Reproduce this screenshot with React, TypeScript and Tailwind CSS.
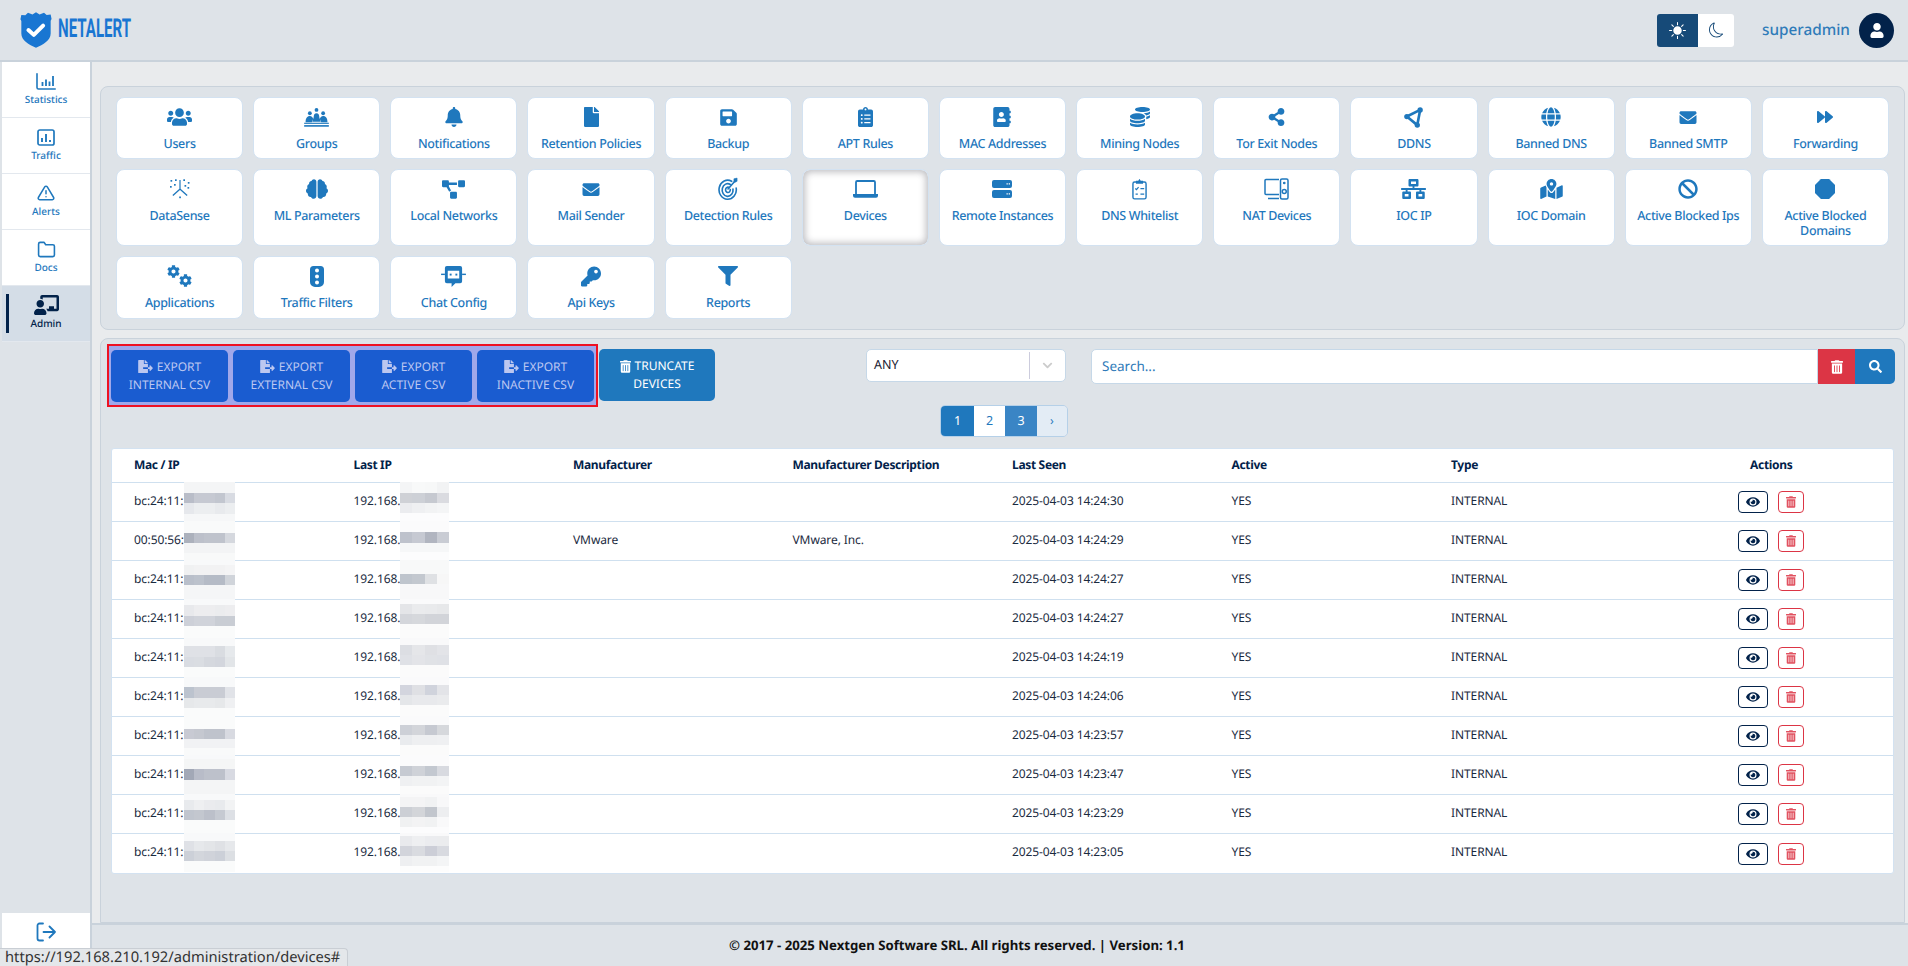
import React from "react";
import {
  FaUsers, FaBell, FaFile, FaSave, FaAddressBook, FaCoins, FaShareAlt, FaGlobe, FaEnvelope, FaForward,
  FaBrain, FaProjectDiagram, FaNetworkWired, FaMapMarkedAlt, FaBan, FaCog, FaKey, FaFilter,
  FaChalkboardTeacher, FaUser, FaFileExport, FaTrashAlt, FaSearch, FaEye, FaChevronDown, FaClipboardList,
} from "react-icons/fa";
import { BsFillOctagonFill, BsMoon, BsSunFill } from "react-icons/bs";
import { FiAlertTriangle, FiFolder } from "react-icons/fi";

const FONT = "font-['Noto_Sans','Liberation_Sans',sans-serif] [text-rendering:geometricPrecision]";

function StatsIcon() {
  return (
    <svg viewBox="0 0 20 17" className="w-[20px] h-[17px]" fill="none" stroke="currentColor" strokeWidth="1.600" strokeLinecap="round">
      <path d="M1 0.800V14.500a1.500 1.500 0 0 0 1.500 1.500H19.200" />
      <path d="M6.500 9v4M10 6.500v6.500M13.500 8.500v4.500M17 3v10" strokeWidth="1.800" strokeLinecap="butt" />
    </svg>
  );
}

function TrafficIcon() {
  return (
    <svg viewBox="0 0 18 17" className="w-[18px] h-[17px]" fill="none" stroke="currentColor">
      <rect x="1" y="1" width="16" height="15" rx="1.800" strokeWidth="1.700" />
      <path d="M5 9v4M9 5v8M13 11v2" strokeWidth="1.900" />
    </svg>
  );
}

function LogoutIcon() {
  return (
    <svg viewBox="0 0 20 20" className="w-[20px] h-[20px]" fill="none" stroke="currentColor" strokeWidth="1.800" strokeLinecap="round" strokeLinejoin="round">
      <path d="M7 1.500H3.500a2 2 0 0 0-2 2v13a2 2 0 0 0 2 2H7" />
      <path d="M7.500 10H19M13.500 4.500L19 10l-5.500 5.500" />
    </svg>
  );
}

function GroupsIcon() {
  return (
    <svg viewBox="0 0 26 20" className="w-[25px] h-[19px] fill-current">
      <circle cx="13" cy="2" r="2" />
      <path d="M10 10c0-3 1-4.500 3-4.500S16 7 16 10l1.500 4.500h-9z" />
      <circle cx="6" cy="5.500" r="2" />
      <path d="M1.500 15c0-4 1.500-6.500 4.500-6.500 2 0 3 1.500 3.500 3L8 15z" />
      <circle cx="20" cy="5.500" r="2" />
      <path d="M24.500 15c0-4-1.500-6.500-4.500-6.500-2 0-3 1.500-3.500 3L18 15z" />
      <rect x="0" y="15.500" width="26" height="1.200" />
      <rect x="0" y="18" width="26" height="1.700" />
    </svg>
  );
}

function DataSenseIcon() {
  return (
    <svg viewBox="0 0 20 20" className="w-[20px] h-[20px] fill-current">
      <path d="M9.400 1h1.200v8.800l7 6.200-.9.900L10 11l-6.700 5.900-.9-.9 7-6.200z" />
      <rect x="0.500" y="1" width="1.700" height="1.700" />
      <rect x="5" y="0.300" width="1.700" height="1.700" />
      <rect x="13.300" y="0.300" width="1.700" height="1.700" />
      <rect x="17.800" y="3" width="1.700" height="1.700" />
      <rect x="0" y="7" width="1.700" height="1.700" />
      <rect x="4" y="5" width="1.700" height="1.700" />
      <rect x="14.500" y="6" width="1.700" height="1.700" />
      <rect x="17.500" y="8" width="1.700" height="1.700" />
      <rect x="9.200" y="17.500" width="1.700" height="1.700" />
    </svg>
  );
}

function DdnsIcon() {
  return (
    <svg viewBox="0 0 20 22" className="w-[19px] h-[21px]">
      <path d="M17 3L3 10l11 9z" fill="none" stroke="currentColor" strokeWidth="2.800" strokeLinejoin="round" />
      <circle cx="17" cy="3" r="2.800" fill="currentColor" />
      <circle cx="3" cy="10" r="2.800" fill="currentColor" />
      <circle cx="14" cy="19" r="2.800" fill="currentColor" />
    </svg>
  );
}

function TargetIcon() {
  return (
    <svg viewBox="0 0 22 26" className="w-[20px] h-[24px]" fill="none" stroke="currentColor" strokeLinecap="round">
      <path d="M15 4.500A9.500 10.500 0 1 0 20 12" strokeWidth="1.800" />
      <path d="M13.500 8A6 7 0 1 0 16.500 13" strokeWidth="1.800" />
      <path d="M12.500 11.500A2.600 3 0 1 0 13.500 13.500" strokeWidth="1.800" />
      <path d="M11 13L19 4" strokeWidth="1.800" />
      <path d="M17.500 5V1.800L21 1v3.500L19 5.500z" fill="currentColor" strokeWidth="0.600" />
    </svg>
  );
}

function LaptopIcon() {
  return (
    <svg viewBox="0 0 25 18" className="w-[25px] h-[18px]">
      <rect x="3" y="1" width="19" height="14" rx="1.200" fill="none" stroke="currentColor" strokeWidth="1.800" />
      <path d="M0 14h25v1.800a2 2 0 0 1-2 2H2a2 2 0 0 1-2-2z" fill="currentColor" />
    </svg>
  );
}

function ServersIcon() {
  return (
    <svg viewBox="0 0 20 18" className="w-[20px] h-[18px]">
      <path fill="currentColor" fillRule="evenodd" d="M2 0h16a2 2 0 0 1 2 2v4a2 2 0 0 1-2 2H2a2 2 0 0 1-2-2V2a2 2 0 0 1 2-2zm12.500 3.300v1.300h1.300V3.300zm2.200 0v1.300H18V3.300z" />
      <path fill="currentColor" fillRule="evenodd" d="M2 10h16a2 2 0 0 1 2 2v4a2 2 0 0 1-2 2H2a2 2 0 0 1-2-2v-4a2 2 0 0 1 2-2zm12.500 3.300v1.300h1.300v-1.300zm2.200 0v1.300H18v-1.300z" />
    </svg>
  );
}

function ClipCheckIcon() {
  return (
    <svg viewBox="0 0 16 22" className="w-[15px] h-[21px]" fill="none" stroke="currentColor" strokeWidth="1.500">
      <rect x="1" y="3" width="14" height="18" rx="1.800" />
      <path d="M5 4V2.500h2L8 1l1 1.500h2V4z" fill="currentColor" />
      <path d="M3.500 10l1.300 1.200L7 8.500M9 10h4M3.800 16h2.400M9 16h4" strokeWidth="1.300" />
    </svg>
  );
}

function NatIcon() {
  return (
    <svg viewBox="0 0 25 22" className="w-[25px] h-[22px]" fill="none" stroke="currentColor" strokeWidth="1.500">
      <path d="M15 1.500H2a1 1 0 0 0-1 1v13a1 1 0 0 0 1 1h13M4 20.500h11" />
      <rect x="16.500" y="1" width="7.500" height="20" rx="1.500" />
      <circle cx="20.250" cy="13.500" r="2" />
      <circle cx="20.250" cy="5" r="0.600" />
    </svg>
  );
}

function TrafficLightIcon() {
  return (
    <svg viewBox="0 0 14 21" className="w-[14px] h-[21px]">
      <path fill="currentColor" fillRule="evenodd" d="M3.500 0h7A3.500 3.500 0 0 1 14 3.500V16a5 5 0 0 1-5 5H5a5 5 0 0 1-5-5V3.500A3.500 3.500 0 0 1 3.500 0zM7 2.500a2 2 0 1 0 0 4 2 2 0 0 0 0-4zm0 6a2 2 0 1 0 0 4 2 2 0 0 0 0-4zm0 6a2 2 0 1 0 0 4 2 2 0 0 0 0-4z" />
    </svg>
  );
}

function ChatIcon() {
  return (
    <svg viewBox="0 0 26 22" className="w-[25px] h-[21px] fill-current">
      <path fillRule="evenodd" d="M6 0h14a2 2 0 0 1 2 2v14a2 2 0 0 1-2 2h-5l-4 4v-4H6a2 2 0 0 1-2-2V2a2 2 0 0 1 2-2zM7 5v8h12V5z" />
      <rect x="0" y="8" width="4" height="1.500" />
      <rect x="22" y="8" width="4" height="1.500" />
      <rect x="9" y="8" width="2" height="2" />
      <rect x="15" y="8" width="2" height="2" />
    </svg>
  );
}

function CogsIcon() {
  return (
    <span className="flex w-[25px] h-[22px]">
      <FaCog className="w-[13px] h-[13px] self-start" />
      <FaCog className="w-[13px] h-[13px] self-end -ml-[1px]" />
    </span>
  );
}

function Shield() {
  return (
    <svg viewBox="0 0 36 40" className="w-[32px] h-[38px]">
      <path fill="#1976d2" d="M18 0l4 2.500L27 .5l3 2.500 4.500-.5 1 5-1 2V24c0 8-8.500 12.500-16.500 16C10 36.500 1.500 32 1.500 24V10l-1-2 1-5L6 3.500 9 .5l5 2z" />
      <path fill="none" stroke="#fff" strokeWidth="4.500" strokeLinecap="round" strokeLinejoin="round" d="M9.500 20l6 5.500L26 15" />
    </svg>
  );
}

const row1 = [
  ["Users", <FaUsers className="w-[25px] h-[20px]" />],
  ["Groups", <GroupsIcon />],
  ["Notifications", <FaBell className="w-[18px] h-[20px]" />],
  ["Retention Policies", <FaFile className="w-[15px] h-[20px]" />],
  ["Backup", <FaSave className="w-[17px] h-[19px]" />],
  ["APT Rules", <FaClipboardList className="w-[15px] h-[20px]" />],
  ["MAC Addresses", <FaAddressBook className="w-[18px] h-[20px]" />],
  ["Mining Nodes", <FaCoins className="w-[20px] h-[20px]" />],
  ["Tor Exit Nodes", <FaShareAlt className="w-[17px] h-[18px]" />],
  ["DDNS", <DdnsIcon />],
  ["Banned DNS", <FaGlobe className="w-[20px] h-[20px]" />],
  ["Banned SMTP", <FaEnvelope className="w-[20px] h-[17px]" />],
  ["Forwarding", <FaForward className="w-[20px] h-[16px]" />],
] as const;
const row2 = [
  ["DataSense", <DataSenseIcon />],
  ["ML Parameters", <FaBrain className="w-[22px] h-[20px]" />],
  ["Local Networks", <FaProjectDiagram className="w-[23px] h-[19px]" />],
  ["Mail Sender", <FaEnvelope className="w-[20px] h-[17px]" />],
  ["Detection Rules", <TargetIcon />],
  ["Devices", <LaptopIcon />],
  ["Remote Instances", <ServersIcon />],
  ["DNS Whitelist", <ClipCheckIcon />],
  ["NAT Devices", <NatIcon />],
  ["IOC IP", <FaNetworkWired className="w-[25px] h-[20px]" />],
  ["IOC Domain", <FaMapMarkedAlt className="w-[23px] h-[20px]" />],
  ["Active Blocked Ips", <FaBan className="w-[20px] h-[20px]" />],
  ["Active Blocked Domains", <BsFillOctagonFill className="w-[20px] h-[20px]" />],
] as const;
const row3 = [
  ["Applications", <CogsIcon />],
  ["Traffic Filters", <TrafficLightIcon />],
  ["Chat Config", <ChatIcon />],
  ["Api Keys", <FaKey className="w-[20px] h-[21px]" />],
  ["Reports", <FaFilter className="w-[20px] h-[20px]" />],
] as const;

function Tile({ label, icon, rowH, active }: { label: string; icon: React.ReactNode; rowH: string; active?: boolean }) {
  return (
    <div
      className={`${rowH} bg-white rounded-[8px] border border-[#d3e2f1] flex flex-col items-center text-[#1f78bd] text-[12.500px] tracking-[-0.35px] leading-[15px] font-medium text-center px-1 pt-[8px] ${active ? "shadow-[inset_0_0_7px_2px_rgba(90,90,100,0.4)]" : ""}`}
    >
      <div className="h-[22px] flex items-center justify-center">{icon}</div>
      <div className="mt-[8px]">{label}</div>
    </div>
  );
}

function SideItem({ icon, label, active }: { icon: React.ReactNode; label: string; active?: boolean }) {
  return (
    <div
      className={`relative h-[56px] flex flex-col items-center pt-[10px] text-[10px] leading-[12px] font-medium border-b border-[#e3e8ee] ${active ? "bg-[#d4dde7] text-[#02224a]" : "bg-white text-[#1f78bd]"}`}
    >
      {active && <div className="absolute left-[4px] top-[8px] w-[3px] h-[39px] bg-[#02224a]" />}
      <div className="h-[18px] flex items-center justify-center">{icon}</div>
      <div className="mt-[3px]">{label}</div>
    </div>
  );
}

type Band = [number, string[]];

const macBands: Band[][] = [
  [[0, ["#f4f5f6"]], [11, ["#b9bdc8", "#c6c9d2", "#c6c9d2", "#c2c6cf", "#d8dbe2"]], [21, ["#e6e8ec", "#eceef0", "#eceef0", "#e8eaed", "#eceef0"]], [32, ["#f6f7f8"]]],
  [[0, ["#f9fafa"]], [12, ["#acb1bc", "#bcc0ca", "#bfc3cc", "#bfc3cc", "#d5d8de"]], [22, ["#f3f4f5"]], [32, ["#f8f9f9"]]],
  [[0, ["#f8f9fa"]], [5, ["#f0f1f2", "#f2f2f3", "#f2f2f3", "#f2f2f3", "#f4f4f5"]], [15, ["#b9bfca", "#bcc2cc", "#b5bbc6", "#b5bbc6", "#d0d4da"]], [25, ["#f5f6f7"]]],
  [[0, ["#f8f9fa"]], [6, ["#e8e9ec", "#ededef", "#ededef", "#ebecee", "#ededef"]], [17, ["#cdd0d8", "#d0d3da", "#d0d3da", "#c9cdd4", "#c9cdd4"]], [27, ["#fafbfb"]]],
  [[0, ["#f8f9fa"]], [8, ["#dfe1e6", "#dfe1e6", "#dfe1e6", "#d9dce1", "#e6e9ec"]], [19, ["#d9dce2", "#dadde2", "#d5d8de", "#d3d6dd", "#e2e5e8"]], [29, ["#fafbfb"]]],
  [[0, ["#f8f9fa"]], [10, ["#bcc3ce", "#c9ccd4", "#c9ccd4", "#c9ccd4", "#e1e3e8"]], [21, ["#e6e8ea", "#e8eaec", "#e8eaec", "#e6e8ea", "#eff0f2"]], [31, ["#fafbfb"]]],
  [[0, ["#fafbfb"]], [13, ["#c8cad3", "#c5c8d0", "#bfc3cc", "#bfc3cc", "#d8dae1"]], [23, ["#f1f2f4"]], [32, ["#f9fafa"]]],
  [[0, ["#f8f9fa"]], [4, ["#f5f6f6"]], [14, ["#a2a8b6", "#b8bcc8", "#bdc1cb", "#bdc1cb", "#d8dae2"]], [25, ["#f4f5f6"]]],
  [[0, ["#f8f9fa"]], [6, ["#e8eaed", "#eeeff1", "#eaebee", "#e8eaed", "#f2f3f4"]], [16, ["#c0c5ce", "#c3c7cf", "#bcc0ca", "#c6cad2", "#dde0e5"]], [26, ["#fafbfb"]]],
  [[0, ["#f8f9fa"]], [8, ["#dfe1e6", "#e6e8eb", "#e3e5e8", "#dfe1e5", "#e6e8eb"]], [18, ["#ccd0d8", "#d3d6dc", "#d0d3da", "#ccd0d8", "#dcdfe3"]], [28, ["#fafbfb"]]],
];

const ipBands: Band[][] = [
  [[0, ["#f4f5f6", "#f8f9f9", "#f7f8f8", "#f2f3f4"]], [11, ["#cfd1d6", "#cdd0d6", "#c6c9d0", "#dadbe0"]], [21, ["#ebecef", "#eff0f2", "#f2f3f4", "#f4f5f6"]], [31, ["#fcfcfd"]]],
  [[0, ["#fbfbfc"]], [11, ["#bec2cc", "#c6c9d2", "#b1b5c0", "#c9ccd4"]], [22, ["#f6f7f8"]], [31, ["#fcfcfd"]]],
  [[0, ["#f8f9f9"]], [14, ["#bfc5cd", "#c3c8cf", "#dfe1e4", "#f7f7f7"]], [24, ["#f8f8f9"]]],
  [[0, ["#fafafb"]], [5, ["#e4e5e8", "#eaebed", "#e9eaec", "#e7e8ea"]], [15, ["#d4d6db", "#d6d8dc", "#d2d4d9", "#d2d4d9"]], [25, ["#fbfbfb"]]],
  [[0, ["#f9f9fa"]], [7, ["#dcdee3", "#e5e6e9", "#dfe0e4", "#e3e4e8"]], [17, ["#dfe1e6", "#e3e4e8", "#e0e2e6", "#dfe1e6"]], [27, ["#fbfbfb"]]],
  [[0, ["#fafafb"]], [8, ["#d3d5de", "#dfe0e4", "#d0d3dc", "#e3e4e8"]], [18, ["#e4e6e9", "#e8e9ec", "#e8e9ec", "#eaebed"]], [28, ["#fbfbfb"]]],
  [[0, ["#fafafb"]], [9, ["#cdd0d7", "#d3d5da", "#c6c9d1", "#d6d8dc"]], [19, ["#e9ebee", "#eeeff1", "#eeeff1", "#eff0f2"]], [29, ["#fbfbfb"]]],
  [[0, ["#fbfbfc"]], [11, ["#c6cad2", "#cfd2d8", "#c3c8d0", "#d8dae0"]], [21, ["#eff0f2", "#f1f2f3", "#f1f2f3", "#f3f4f5"]], [31, ["#fbfbfb"]]],
  [[0, ["#f9f9fa"]], [3, ["#f4f4f5", "#f4f4f5", "#f1f2f3", "#f8f8f9"]], [13, ["#cccfd5", "#d3d5d9", "#c2c6cd", "#edeef0"]], [23, ["#f0f1f2", "#f3f3f4", "#f1f2f3", "#f9f9fa"]], [33, ["#fcfcfd"]]],
  [[0, ["#f9f9fa"]], [3, ["#e9eaed", "#eeeff1", "#ebecef", "#ebecee"]], [13, ["#d2d4db", "#d9dbe0", "#ccced7", "#d8dae0"]], [23, ["#eeeff1", "#f1f2f3", "#f1f2f3", "#f4f5f6"]], [33, ["#fdfdfd"]]],
];

function Redact({ bands, left, width }: { bands: Band[]; left: number; width: number }) {
  return (
    <div className="absolute top-[-1px] h-[39px] bg-[#fcfcfd]" style={{ left, width }}>
      {bands.map(([y, cells], i) => {
        const next = i + 1 < bands.length ? bands[i + 1][0] : 39;
        return (
          <div key={i} className="absolute left-0 right-0 flex" style={{ top: y, height: next - y }}>
            {cells.map((c, j) => (
              <div key={j} className="flex-1" style={{ background: c }} />
            ))}
          </div>
        );
      })}
    </div>
  );
}

const rows = [
  ["bc:24:11:", "14:24:30"],
  ["00:50:56:", "14:24:29", "VMware", "VMware, Inc."],
  ["bc:24:11:", "14:24:27"],
  ["bc:24:11:", "14:24:27"],
  ["bc:24:11:", "14:24:19"],
  ["bc:24:11:", "14:24:06"],
  ["bc:24:11:", "14:23:57"],
  ["bc:24:11:", "14:23:47"],
  ["bc:24:11:", "14:23:29"],
  ["bc:24:11:", "14:23:05"],
];

const exportsList = [
  ["EXPORT", "INTERNAL CSV"],
  ["EXPORT", "EXTERNAL CSV"],
  ["EXPORT", "ACTIVE CSV"],
  ["EXPORT", "INACTIVE CSV"],
];

const GRID = "grid grid-cols-[repeat(7,219.5px)_1fr]";

export default function App() {
  return (
    <div className={`${FONT} w-[1908px] h-[966px] overflow-hidden bg-[#dee3e8] flex flex-col relative`}>
      <header className="h-[62px] shrink-0 border-b-2 border-[#c9d2db] flex items-center justify-between pl-[20px] pr-[14px]">
        <div className="flex items-center gap-[6px] pb-[1px]">
          <Shield />
          <span className="font-['Roboto',sans-serif] font-bold text-[#1976d2] text-[26px] scale-x-[0.58] origin-left">NETALERT</span>
        </div>
        <div className="flex items-center">
          <div className="flex h-[33px] rounded-[3px] overflow-hidden">
            <div className="w-[41px] bg-[#164a78] text-white flex items-center justify-center"><BsSunFill className="w-[17px] h-[17px]" /></div>
            <div className="w-[36px] bg-white text-[#164a78] flex items-center justify-center"><BsMoon className="w-[15px] h-[16px]" /></div>
          </div>
          <span className="ml-[28px] w-[86px] text-[15.300px] font-medium text-[#2f7bb9]">superadmin</span>
          <div className="ml-[11px] w-[35px] h-[35px] rounded-full bg-[#02224a] flex items-center justify-center text-white"><FaUser className="w-[14px] h-[15px]" /></div>
        </div>
      </header>

      <div className="flex-1 flex min-h-0">
        <aside className="w-[92px] shrink-0 border-r-2 border-[#c9d2db] pl-[2px] flex flex-col">
          <SideItem label="Statistics" icon={<StatsIcon />} />
          <SideItem label="Traffic" icon={<TrafficIcon />} />
          <SideItem label="Alerts" icon={<FiAlertTriangle className="w-[20px] h-[18px]" />} />
          <SideItem label="Docs" icon={<FiFolder className="w-[21px] h-[19px]" />} />
          <SideItem active label="Admin" icon={<FaChalkboardTeacher className="w-[25px] h-[20px]" />} />
          <div className="flex-1" />
          <div className="h-[53px] bg-white text-[#1f78bd] flex justify-center pt-[9px]">
            <LogoutIcon />
          </div>
        </aside>

        <main className="flex-1 min-w-0 flex flex-col">
          <div className="h-[861px] bg-[#e9ebed] pl-[8px] pr-[3px] pt-[24px] flex flex-col gap-[8px]">
            <section className="h-[244px] bg-[#dee3e8] border border-[#c9d2db] rounded-[8px] px-[15px] pt-[10px] flex flex-col gap-[10px]">
              <div className="grid grid-cols-[repeat(13,minmax(0,1fr))] gap-x-[10px]">
                {row1.map(([l, i]) => <Tile key={l} label={l} icon={i} rowH="h-[62px]" />)}
              </div>
              <div className="grid grid-cols-[repeat(13,minmax(0,1fr))] gap-x-[10px]">
                {row2.map(([l, i]) => <Tile key={l} label={l} icon={i} rowH="h-[77px]" active={l === "Devices"} />)}
              </div>
              <div className="grid grid-cols-[repeat(13,minmax(0,1fr))] gap-x-[10px]">
                {row3.map(([l, i]) => <Tile key={l} label={l} icon={i} rowH="h-[63px]" />)}
              </div>
            </section>

            <section className="flex-1 bg-[#dee3e8] border border-[#c9d2db] rounded-t-[8px] pl-[6px] pr-[9px] pt-[5px] flex flex-col">
              <div className="flex items-start">
                <div className="w-[491px] h-[63px] border-2 border-[#ee1122] bg-[#a0a8ea] flex items-center gap-[5px] px-[2px]">
                  {exportsList.map(([a, b]) => (
                    <div key={b} className="h-[52px] flex-1 rounded-[5px] bg-[#1a5cd0] text-[#bcc7f0] text-[12px] leading-[18px] flex flex-col items-center justify-center">
                      <div className="flex items-center gap-[4px]"><FaFileExport className="w-[15px] h-[13px]" />{a}</div>
                      <div>{b}</div>
                    </div>
                  ))}
                </div>
                <div className="ml-[1px] mt-[5px] w-[116px] h-[52px] rounded-[5px] bg-[#1f78bd] text-white text-[12px] leading-[18px] flex flex-col items-center justify-center">
                  <div className="flex items-center gap-[4px]"><FaTrashAlt className="w-[11px] h-[13px]" />TRUNCATE</div>
                  <div>DEVICES</div>
                </div>
                <div className="ml-[151px] mt-[5px] w-[200px] h-[33px] bg-white border border-[#c6d8e8] rounded-[5px] flex items-center text-[12.500px] text-[#223]">
                  <span className="pl-[7px] flex-1">ANY</span>
                  <span className="h-[27px] border-l border-[#ccd] w-[36px] flex items-center justify-center text-[#ccc]"><FaChevronDown className="w-[11px] h-[11px]" /></span>
                </div>
                <div className="ml-[25px] mt-[5px] flex-1 h-[35px] flex">
                  <div className="flex-1 bg-white border border-[#c6d8e8] rounded-l-[5px] text-[#2f7bb9] text-[13.500px] pl-[10px] flex items-center">Search...</div>
                  <div className="w-[37px] bg-[#dc3545] text-white flex items-center justify-center"><FaTrashAlt className="w-[12px] h-[14px]" /></div>
                  <div className="w-[40px] bg-[#1f78bd] text-white rounded-r-[5px] flex items-center justify-center"><FaSearch className="w-[13px] h-[13px]" /></div>
                </div>
              </div>

              <div className="flex mt-[-2px] ml-[833px] h-[32px] text-[12.500px]">
                <div className="flex h-[32px] rounded-[5px] overflow-hidden border border-[#b5d0e8]">
                  <div className="w-[33px] bg-[#1f78bd] text-white flex items-center justify-center">1</div>
                  <div className="w-[31px] bg-white text-[#1f78bd] flex items-center justify-center">2</div>
                  <div className="w-[32px] bg-[#3a85c5] text-white flex items-center justify-center">3</div>
                  <div className="w-[30px] bg-[#e3ecf5] text-[#1f78bd] flex items-center justify-center">›</div>
                </div>
              </div>

              <div className="mt-[11px] ml-[4px] mr-[1px] bg-white border border-[#d3e2f1] rounded-[3px] text-[12px] tracking-[-0.1px] text-[#1a2a40]">
                <div className={`${GRID} h-[34px] items-center font-bold tracking-[-0.33px] text-[#02224a] border-b border-[#cfe0ef] pl-[22px] pb-[2px]`}>
                  <div>Mac / IP</div><div>Last IP</div><div>Manufacturer</div><div>Manufacturer Description</div><div>Last Seen</div><div>Active</div><div>Type</div><div className="text-center pr-[21px]">Actions</div>
                </div>
                {rows.map(([mac, time, m, d], i) => (
                  <div key={i} className={`${GRID} relative h-[39px] items-center pl-[22px] pb-[3px] ${i < rows.length - 1 ? "border-b border-[#cfe0ef]" : ""}`}>
                    <div>{mac}</div>
                    <div>192.168.</div>
                    <div>{m}</div>
                    <div>{d}</div>
                    <div>2025-04-03 {time}</div>
                    <div>YES</div>
                    <div>INTERNAL</div>
                    <div className="flex items-center justify-center gap-[10px] pr-[21px] pt-[3px]">
                      <div className="w-[30px] h-[22px] rounded-[4px] border border-[#02224a] text-[#02224a] flex items-center justify-center"><FaEye className="w-[14px] h-[14px]" /></div>
                      <div className="w-[26px] h-[22px] rounded-[4px] border border-[#dc3545] text-[#dc3545] flex items-center justify-center"><FaTrashAlt className="w-[10px] h-[12px] opacity-85" /></div>
                    </div>
                    <Redact bands={macBands[i]} left={72} width={51} />
                    <Redact bands={ipBands[i]} left={288} width={49} />
                  </div>
                ))}
              </div>
            </section>
          </div>
          <footer className="flex-1 border-t-2 border-[#c9d2db] flex items-center justify-center pr-[86px] text-[13.200px] font-bold text-[#111]">
            © 2017 - 2025 Nextgen Software SRL. All rights reserved. | Version: 1.1
          </footer>
        </main>
      </div>

      <div className="absolute left-0 bottom-0 w-[348px] h-[18px] bg-[#e4e7ea] border-t border-r border-[#c9ced4] rounded-tr-[4px] text-[14.700px] leading-[17px] text-[#333] pl-[5px]">
        https://192.168.210.192/administration/devices#
      </div>
    </div>
  );
}
